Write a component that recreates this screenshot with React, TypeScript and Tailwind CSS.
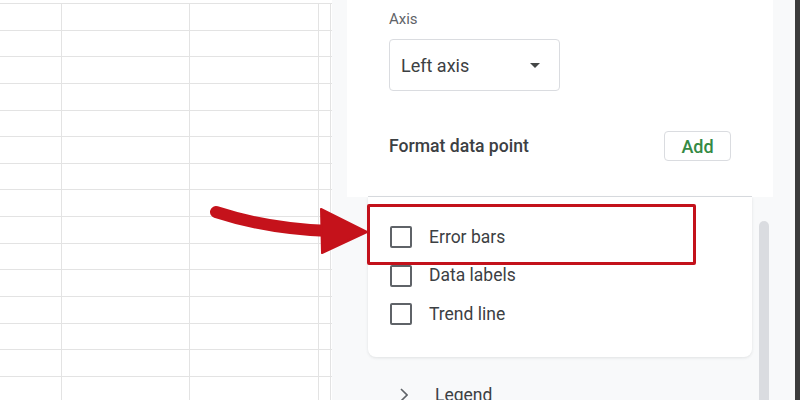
import React from 'react';

const ROWS = Array.from({ length: 15 }, (_, i) => i);
const SERIES_OPTIONS = ['Error bars', 'Data labels', 'Trend line'];

function Sheet() {
  return (
    <div className="w-[332px] shrink-0 overflow-hidden bg-white">
      <div className="mt-[3px] border-t border-[#e3e3e3]">
        {ROWS.map((r) => (
          <div key={r} className="flex h-[26.65px] border-b border-[#e3e3e3]">
            <div className="w-[62px] border-r border-[#e3e3e3]" />
            <div className="w-[128px] border-r border-[#e3e3e3]" />
            <div className="w-[129px] border-r border-[#e3e3e3]" />
            <div className="w-[12px] border-r border-[#e3e3e3]" />
          </div>
        ))}
      </div>
    </div>
  );
}

function Checkbox() {
  return <div className="h-[22px] w-[22px] shrink-0 rounded-[2px] border-2 border-[#5f6368]" />;
}

export default function App() {
  return (
    <div className="relative flex h-[400px] w-[800px] overflow-hidden bg-white font-['Roboto',sans-serif]">
      <Sheet />
      <div className="w-[15px] shrink-0 bg-[#f8f9fa]" />

      {/* chart editor panel */}
      <div className="flex w-[426px] shrink-0 flex-col bg-[#f8f9fa]">
        <div className="flex flex-col bg-white pt-[9px]">
          <div className="pl-[42px] text-[15px] leading-[20px] text-[#5f6368]">Axis</div>
          <div className="ml-[42px] mt-[10px] flex h-[52px] w-[171px] items-center justify-between rounded-[4px] border border-[#dadce0] pl-[11px] pr-[19px]">
            <span className="text-[18px] text-[#3c4043]">Left axis</span>
            <svg width="10" height="5" viewBox="0 0 10 5">
              <path d="M0 0 L10 0 L5 5 Z" fill="#444746" />
            </svg>
          </div>
          <div className="mt-[40px] flex h-[30px] items-center justify-between pl-[42px] pr-[42px]">
            <span className="text-[17.6px] font-medium text-[#3c4043]">Format data point</span>
            <button className="flex h-[30px] w-[67px] items-center justify-center rounded-[4px] border border-[#dadce0] bg-white text-[18px] font-medium text-[#348a44]">
              Add
            </button>
          </div>
          <div className="mx-[21px] mt-[35px] border-b border-[#dadce0]" />
        </div>

        <div className="flex flex-1">
          <div className="ml-[21px] flex w-[384px] flex-col">
            <div className="flex flex-col gap-[16.5px] rounded-b-lg bg-white pb-[32px] pl-[22px] pt-[29px] shadow-[0_1px_3px_rgba(60,64,67,0.12)]">
              {SERIES_OPTIONS.map((label) => (
                <div key={label} className="flex h-[22px] items-center gap-[17px]">
                  <Checkbox />
                  <span className="text-[17.5px] text-[#3c4043]">{label}</span>
                </div>
              ))}
            </div>
            <div className="mt-[27px] flex h-[22px] items-center gap-[27px] pl-[32px]">
              <svg width="8" height="14" viewBox="0 0 8 14">
                <path d="M1 1 L7 7 L1 13" fill="none" stroke="#5f6368" strokeWidth="1.6" />
              </svg>
              <span className="text-[17.5px] text-[#3c4043]">Legend</span>
            </div>
          </div>
          <div className="ml-[7px] mt-[24px] w-[10px] rounded-t-full bg-[#dadce0]" />
        </div>
      </div>

      <div className="w-[22px] shrink-0 bg-[#f8f9fa]" />
      <div className="w-[5px] shrink-0 bg-[#3c3c3c]" />

      {/* annotation overlay */}
      <svg className="pointer-events-none absolute left-0 top-0" width="800" height="400" viewBox="0 0 800 400">
        <path d="M216 212 Q268 229 330 231" fill="none" stroke="#c5121b" strokeWidth="12" strokeLinecap="round" />
        <path d="M321 209 L367 232 L322 253 Z" fill="#c5121b" strokeLinejoin="round" stroke="#c5121b" strokeWidth="2" />
      </svg>
      <div className="pointer-events-none absolute left-[367px] top-[204px] h-[61px] w-[329px] rounded-[2px] border-[3px] border-[#c3111b]" />
    </div>
  );
}
